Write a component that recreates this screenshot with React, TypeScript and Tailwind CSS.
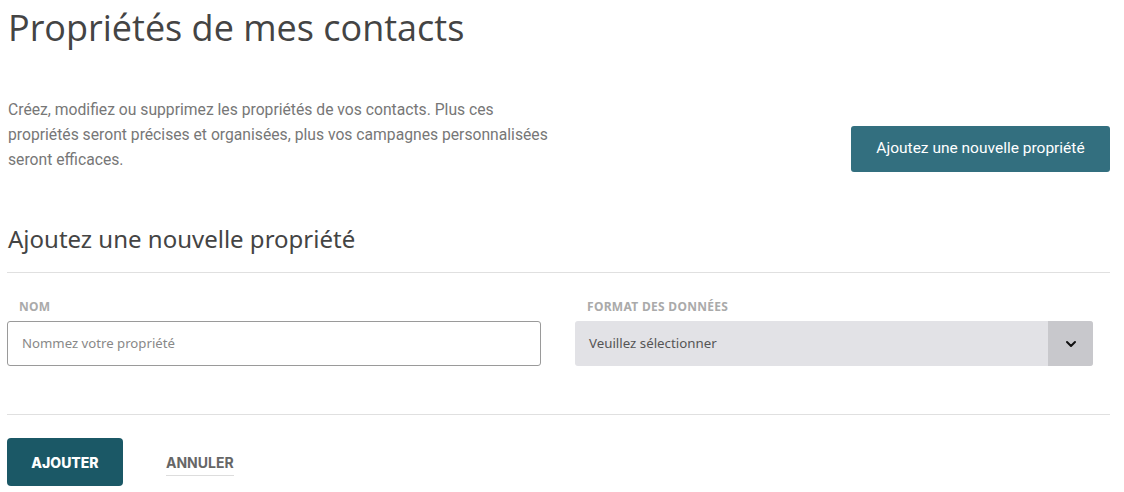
import { ChevronDown } from 'lucide-react'

const ubuntu = "font-['Noto_Sans','Open_Sans',sans-serif]"

export default function App() {
  return (
    <div className="w-[1124px] h-[492px] bg-white overflow-hidden pl-[7px] pr-[14px]">
      <h1 className="font-['Open_Sans',sans-serif] text-[36px] leading-[48px] text-[#444] pt-[4px] pl-[1px]">
        Propriétés de mes contacts
      </h1>

      <div className="flex items-start justify-between mt-[45px]">
        <p className="font-['Roboto',sans-serif] text-[15.7px] leading-[25px] text-[#777] w-[560px] pl-[1px]">
          Créez, modifiez ou supprimez les propriétés de vos contacts. Plus ces propriétés seront précises et organisées, plus vos campagnes personnalisées seront efficaces.
        </p>
        <button className="mt-[29px] w-[259px] h-[46px] rounded-[3px] bg-[#336f7f] text-white font-['Roboto',sans-serif] text-[15.5px]">
          Ajoutez une nouvelle propriété
        </button>
      </div>

      <h2 className={`${ubuntu} text-[24px] leading-[30px] text-[#444] mt-[52px] pl-[1px]`}>
        Ajoutez une nouvelle propriété
      </h2>
      <div className="h-px bg-[#e0e0e0] mt-[18px]" />

      <div className="flex gap-[34px] mt-[26px]">
        <div className="w-[534px]">
          <label className={`${ubuntu} block text-[12px] tracking-[0.3px] font-bold text-[#aaa] pl-[12px] leading-[16px]`}>NOM</label>
          <div className="mt-[6px] h-[45px] border border-[#9a9a9a] rounded-[3px] flex items-center px-[14px]">
            <span className={`${ubuntu} text-[13.2px] text-[#888]`}>Nommez votre propriété</span>
          </div>
        </div>
        <div className="w-[518px]">
          <label className={`${ubuntu} block text-[12px] tracking-[0.3px] font-bold text-[#aaa] pl-[12px] leading-[16px]`}>FORMAT DES DONNÉES</label>
          <div className="mt-[6px] h-[45px] rounded-[3px] bg-[#e2e2e6] flex items-stretch overflow-hidden">
            <div className={`${ubuntu} flex-1 flex items-center px-[14px] text-[13.3px] text-[#555]`}>Veuillez sélectionner</div>
            <div className="w-[45px] bg-[#c8c8cc] flex items-center justify-center">
              <ChevronDown size={16} strokeWidth={3} className="text-[#111]" />
            </div>
          </div>
        </div>
      </div>

      <div className="h-px bg-[#e0e0e0] mt-[48px]" />

      <div className="flex items-center mt-[23px]">
        <button className="w-[116px] h-[48px] rounded-[4px] bg-[#1b5866] text-white font-['Inter',sans-serif] font-extrabold text-[14px]">
          AJOUTER
        </button>
        <span className="ml-[43px] mt-[4px] font-['Inter',sans-serif] font-bold text-[14px] text-[#666] border-b-[1.5px] border-[#ddd] pb-[2px]">
          ANNULER
        </span>
      </div>
    </div>
  )
}
